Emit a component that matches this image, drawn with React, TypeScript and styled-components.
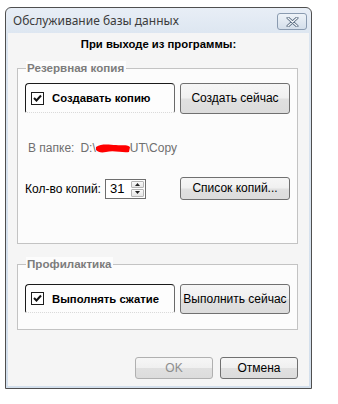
import React from 'react';
import styled, { createGlobalStyle } from 'styled-components';

const GlobalStyle = createGlobalStyle`
  html, body {
    margin: 0;
    padding: 0;
    background: #ffffff;
  }
  body {
    font-family: "Liberation Sans", Arial, sans-serif;
    font-size: 12px;
    color: #000;
  }
`;

const Window = styled.div`
  margin: 7px 0 0 5px;
  width: 307px;
  height: 382px;
  box-sizing: border-box;
  border: 1px solid #4f4f4f;
  border-radius: 6px 6px 0 0;
  background: linear-gradient(#e8eef6, #dbe5f0 30px, #d3dfec);
  display: flex;
  flex-direction: column;
  overflow: hidden;
`;

const TitleBar = styled.div`
  height: 25px;
  display: flex;
  align-items: center;
  justify-content: space-between;
  padding: 0 4px 0 7px;
`;

const Title = styled.span`
  font-family: "Noto Sans", "Open Sans", sans-serif;
  font-size: 12px;
  color: #3c3c3c;
`;

const CloseButton = styled.div`
  width: 30px;
  height: 17px;
  box-sizing: border-box;
  border: 1px solid #8a9bb0;
  border-radius: 3px;
  background: linear-gradient(#eef3f8, #d4dfeb);
  display: flex;
  align-items: center;
  justify-content: center;
  margin-top: 2px;
`;

const Client = styled.div`
  flex: 1;
  margin: 0 2px 2px 2px;
  background: #f5f5f5;
  display: flex;
  flex-direction: column;
`;

const Heading = styled.div`
  margin-top: 4px;
  height: 14px;
  line-height: 14px;
  text-align: center;
  font-weight: bold;
  font-size: 11.3px;
`;

const GroupBox = styled.div<{ $top: number; $height: number; $padTop: number }>`
  position: relative;
  margin: ${(p) => p.$top}px 0 0 9px;
  width: 281px;
  height: ${(p) => p.$height}px;
  box-sizing: border-box;
  border: 1px solid #c3c3c3;
  background: #fcfcfc;
  padding: ${(p) => p.$padTop}px 0 0 7px;
  display: flex;
  flex-direction: column;
`;

const Legend = styled.span`
  position: absolute;
  left: 8px;
  top: -8px;
  padding: 0 2px 0 1px;
  background: #fcfcfc;
  line-height: 14px;
  font-weight: bold;
  font-size: 11.6px;
  color: #7c7c7c;
`;

const Row = styled.div<{ $top?: number }>`
  display: flex;
  align-items: center;
  margin-top: ${(p) => p.$top ?? 0}px;
`;

const CheckPanel = styled.div<{ $h: number }>`
  width: 150px;
  height: ${(p) => p.$h}px;
  box-sizing: border-box;
  border: 1px solid #1a1a1a;
  border-right-color: #6a6a6a;
  border-bottom: 1px dotted #d8d8d8;
  border-radius: 4px 4px 2px 2px;
  background: #fdfdfd;
  display: flex;
  align-items: center;
  padding-left: 5px;
  font-weight: bold;
  font-size: 11.3px;
  align-self: flex-start;
`;

const CheckBox = styled.span`
  width: 13px;
  height: 13px;
  box-sizing: border-box;
  border: 1px solid #1c1c1c;
  background: #fff;
  display: inline-flex;
  align-items: center;
  justify-content: center;
  margin-right: 8px;
`;

const Button = styled.div<{ $w: number; $h: number; $disabled?: boolean }>`
  width: ${(p) => p.$w}px;
  height: ${(p) => p.$h}px;
  box-sizing: border-box;
  border: 1px solid ${(p) => (p.$disabled ? '#b0b0b0' : '#707070')};
  border-radius: 3px;
  background: linear-gradient(#f6f6f6 0%, #f0f0f0 48%, #e0e0e0 52%, #dcdcdc 100%);
  display: flex;
  align-items: center;
  justify-content: center;
  color: ${(p) => (p.$disabled ? '#8d8d8d' : '#000')};
  font-size: 12px;
  padding-bottom: 1px;
`;

const SideButton = styled(Button)<{ $gap?: number }>`
  margin-left: ${(p) => p.$gap ?? 5}px;
  align-self: flex-start;
`;

const FolderLine = styled.div`
  margin-top: 27px;
  line-height: 14px;
  padding-left: 3px;
  color: #6f6f6f;
  display: flex;
  align-items: center;
`;

const Path = styled.span`
  margin-left: 6px;
  display: inline-flex;
  align-items: center;
`;

const Label = styled.span`
  width: 80px;
`;

const Spin = styled.div`
  width: 41px;
  height: 20px;
  box-sizing: border-box;
  border: 1px solid #6e6e6e;
  background: #fff;
  display: flex;
  align-items: stretch;
`;

const SpinValue = styled.span`
  flex: 1;
  display: flex;
  align-items: center;
  padding-left: 4px;
  font-size: 13px;
`;

const SpinArrows = styled.div`
  width: 13px;
  display: flex;
  flex-direction: column;
  padding: 1px 1px 1px 0;
  gap: 1px;
`;

const SpinArrow = styled.div`
  flex: 1;
  border: 1px solid #b5b5b5;
  border-radius: 1px;
  background: linear-gradient(#fafafa, #e6e6e6);
  display: flex;
  align-items: center;
  justify-content: center;
`;

const Footer = styled.div`
  margin: 27px 11px 0 0;
  display: flex;
  justify-content: flex-end;
  gap: 7px;
`;

const Tick = () => (
  <svg width="9" height="9" viewBox="0 0 9 9">
    <path d="M1 4 L3.5 6.5 L8 1.5" stroke="#111" strokeWidth="2" fill="none" />
  </svg>
);

const Arrow = ({ up }: { up?: boolean }) => (
  <svg width="5" height="3" viewBox="0 0 5 3">
    <path d={up ? 'M0 3 L2.5 0 L5 3 Z' : 'M0 0 L2.5 3 L5 0 Z'} fill="#222" />
  </svg>
);

const App: React.FC = () => {
  return (
    <>
      <GlobalStyle />
      <Window>
        <TitleBar>
          <Title>Обслуживание базы данных</Title>
          <CloseButton>
            <svg width="13" height="10" viewBox="0 0 13 10">
              <path
                d="M2 1 L11 9 M11 1 L2 9"
                stroke="#5b6d82"
                strokeWidth="3"
                strokeLinecap="round"
              />
              <path
                d="M2 1 L11 9 M11 1 L2 9"
                stroke="#f4f7fa"
                strokeWidth="1.2"
                strokeLinecap="round"
              />
            </svg>
          </CloseButton>
        </TitleBar>
        <Client>
          <Heading>При выходе из программы:</Heading>

          <GroupBox $top={17} $height={176} $padTop={14}>
            <Legend>Резервная копия</Legend>
            <Row>
              <CheckPanel $h={30}>
                <CheckBox>
                  <Tick />
                </CheckBox>
                Создавать копию
              </CheckPanel>
              <SideButton $w={110} $h={31}>
                Создать сейчас
              </SideButton>
            </Row>
            <FolderLine>
              В папке:
              <Path>
                D:\
                <svg width="34" height="11" viewBox="0 0 34 11">
                  <path
                    d="M0 4 C6 0 14 2 20 2 C26 3 30 1 34 4 L33 9 C26 10 18 7 10 9 C5 10 2 9 0 7 Z"
                    fill="#ff0000"
                  />
                </svg>
                UT\Copy
              </Path>
            </FolderLine>
            <Row $top={22}>
              <Label>Кол-во копий:</Label>
              <Spin>
                <SpinValue>31</SpinValue>
                <SpinArrows>
                  <SpinArrow>
                    <Arrow up />
                  </SpinArrow>
                  <SpinArrow>
                    <Arrow />
                  </SpinArrow>
                </SpinArrows>
              </Spin>
              <SideButton $w={110} $h={23} $gap={34}>
                Список копий...
              </SideButton>
            </Row>
          </GroupBox>

          <GroupBox $top={20} $height={66} $padTop={19}>
            <Legend>Профилактика</Legend>
            <Row>
              <CheckPanel $h={29}>
                <CheckBox>
                  <Tick />
                </CheckBox>
                Выполнять сжатие
              </CheckPanel>
              <SideButton $w={110} $h={30}>
                Выполнить сейчас
              </SideButton>
            </Row>
          </GroupBox>

          <Footer>
            <Button $w={78} $h={22} $disabled>
              OK
            </Button>
            <Button $w={78} $h={22}>
              Отмена
            </Button>
          </Footer>
        </Client>
      </Window>
    </>
  );
};

export default App;
